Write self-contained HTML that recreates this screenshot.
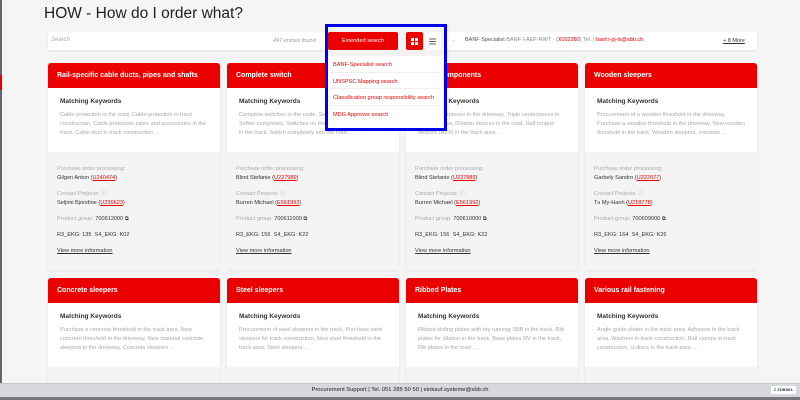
<!DOCTYPE html>
<html><head><meta charset="utf-8"><style>
*{box-sizing:border-box;margin:0;padding:0}
body{width:800px;height:400px;overflow:hidden;background:#f5f5f5;font-family:"Liberation Sans",sans-serif;position:relative;color:#333}
.abs{position:absolute}
h1{position:absolute;left:44px;top:5px;font-size:15.5px;font-weight:normal;color:#222}
.bar{position:absolute;top:32px;height:18px;background:#fff;box-shadow:0 1px 2px rgba(0,0,0,.1)}
.card{position:absolute;width:172px;background:#f4f4f4;box-shadow:0 1px 2px rgba(0,0,0,.08)}
.hd{background:#eb0000;color:#fff;font-weight:bold;font-size:7px;height:25px;line-height:25px;padding-left:9px;border-radius:3px 3px 0 0}
.bd{background:#fff;height:64px;padding:10px 12px 0 12px}
.kt{font-size:6.5px;font-weight:bold;color:#333;margin-bottom:6px}
.kx{font-size:5.6px;line-height:9px;color:#a8a8a8}
.gr{padding:13px 9px 0 9px;font-size:5.6px;color:#333;line-height:9px}
.lb{color:#aaa;margin-top:7px}
.m7{margin-top:7px}
.r{color:#eb0000;text-decoration:underline}
.dd{font-size:5.6px;color:#eb0000;padding:6px 2px 0 3px;height:16.5px;border-bottom:1px solid #eee}
.top{z-index:10}
</style></head><body>
<div class="abs" style="left:0;top:0;width:2px;height:384px;background:#666"></div>
<div class="abs" style="left:0;top:75px;width:2px;height:15px;background:#eb0000"></div>
<h1>HOW - How do I order what?</h1>
<div class="bar" style="left:48px;width:280px"><span class="abs" style="left:3px;top:5px;font-size:6px;color:#aaa;font-style:italic">Search</span><span class="abs" style="left:225px;top:6px;font-size:5.5px;color:#999;font-style:italic">497 entries found</span></div>
<div class="bar" style="left:446px;width:311px;font-size:5.5px;color:#888"><span class="abs" style="left:5px;top:5px;color:#bbb">⌄</span><span class="abs" style="left:19px;top:5px"><span style="color:#555">BANF Specialist</span> BANF I-AEP-RWT - (<span style="color:#eb0000">X002980</span>) Tel. | <span style="color:#eb0000">banf.i-pj-ls@sbb.ch</span></span><span class="abs" style="left:277px;top:6px;color:#333;text-decoration:underline">+ 8 More</span></div>

<!-- row1 -->
<div class="card" style="left:48px;top:63px;height:207px"><div class="hd">Rail-specific cable ducts, pipes and shafts</div><div class="bd"><div class="kt">Matching Keywords</div><div class="kx">Cable protection in the road, Cable protection in track construction, Cable protection pipes and accessories in the track, Cable duct in track construction ...</div></div>
<div class="gr"><div style="color:#aaa">Purchase order processing:</div><div>Gilgen Anton (<span class="r">U240474</span>)</div><div class="lb">Contact Projects: ⓘ</div><div>Seljimi Bjondine (<span class="r">U236623</span>)</div><div class="lb"><span>Product group:</span> <span style="color:#333">700612000 ⧉</span></div><div class="m7">R3_EKG: 135 &nbsp;S4_EKG: K02</div><div class="m7" style="text-decoration:underline">View more information</div></div></div>
<div class="card" style="left:227px;top:63px;height:207px"><div class="hd">Complete switch</div><div class="bd"><div class="kt">Matching Keywords</div><div class="kx">Complete switches in the route, Switches on the track, Soften completely, Switches on the track, Installed switches in the track, Switch completely into the road ...</div></div>
<div class="gr"><div style="color:#aaa">Purchase order processing:</div><div>Blind Stefanie (<span class="r">U227989</span>)</div><div class="lb">Contact Projects: ⓘ</div><div>Burren Michael (<span class="r">E561992</span>)</div><div class="lb"><span>Product group:</span> <span style="color:#333">700611000 ⧉</span></div><div class="m7">R3_EKG: 156 &nbsp;S4_EKG: K22</div><div class="m7" style="text-decoration:underline">View more information</div></div></div>
<div class="card" style="left:406px;top:63px;height:207px"><div class="hd">Switch components</div><div class="bd"><div class="kt">Matching Keywords</div><div class="kx">Track centerpieces in the driveway, Triple centerpieces in the track area, Dilation devices in the road, Half tongue devices (HZV) in the track area ...</div></div>
<div class="gr"><div style="color:#aaa">Purchase order processing:</div><div>Blind Stefanie (<span class="r">U227989</span>)</div><div class="lb">Contact Projects: ⓘ</div><div>Burren Michael (<span class="r">E561992</span>)</div><div class="lb"><span>Product group:</span> <span style="color:#333">700610000 ⧉</span></div><div class="m7">R3_EKG: 156 &nbsp;S4_EKG: K22</div><div class="m7" style="text-decoration:underline">View more information</div></div></div>
<div class="card" style="left:585px;top:63px;height:207px"><div class="hd">Wooden sleepers</div><div class="bd"><div class="kt">Matching Keywords</div><div class="kx">Procurement of a wooden threshold in the driveway, Purchase a wooden threshold in the driveway, New wooden threshold in the track, Wooden sleepers, creosote ...</div></div>
<div class="gr"><div style="color:#aaa">Purchase order processing:</div><div>Garbely Sandro (<span class="r">U222077</span>)</div><div class="lb">Contact Projects: ⓘ</div><div>Tu My-Hanh (<span class="r">U218778</span>)</div><div class="lb"><span>Product group:</span> <span style="color:#333">700609000 ⧉</span></div><div class="m7">R3_EKG: 164 &nbsp;S4_EKG: K26</div><div class="m7" style="text-decoration:underline">View more information</div></div></div>
<!-- row2 -->
<div class="card" style="left:48px;top:278px;height:120px"><div class="hd">Concrete sleepers</div><div class="bd"><div class="kt">Matching Keywords</div><div class="kx">Purchase a concrete threshold in the track area, New concrete threshold in the driveway, New material concrete sleepers in the driveway, Concrete sleepers ...</div></div></div>
<div class="card" style="left:227px;top:278px;height:120px"><div class="hd">Steel sleepers</div><div class="bd"><div class="kt">Matching Keywords</div><div class="kx">Procurement of steel sleepers in the track, Purchase steel sleepers for track construction, New steel threshold in the track area, Steel sleepers ...</div></div></div>
<div class="card" style="left:406px;top:278px;height:120px"><div class="hd">Ribbed Plates</div><div class="bd"><div class="kt">Matching Keywords</div><div class="kx">Ribbed sliding plates with dry running SBB in the track, Rib plates for dilation in the track, Base plates RV in the track, Rib plates in the road ...</div></div></div>
<div class="card" style="left:585px;top:278px;height:120px"><div class="hd">Various rail fastening</div><div class="bd"><div class="kt">Matching Keywords</div><div class="kx">Angle guide plates in the track area, Adhesive in the track area, Washers in track construction, Rail clamps in track construction, U-discs in the track area ...</div></div></div>

<div class="abs top" style="left:325px;top:24px;width:122px;height:107px;background:#f2f2f2"></div>
<div class="abs top" style="left:328px;top:32px;width:70px;height:18px;background:#eb0000;color:#fff;font-size:5.6px;text-align:center;line-height:18px;border-radius:2px">Extended search</div>
<div class="abs top" style="left:406px;top:32px;width:17px;height:18px;background:#eb0000;border-radius:2px"><svg width="17" height="18"><g fill="#fff"><rect x="5" y="6" width="3" height="3"/><rect x="9" y="6" width="3" height="3"/><rect x="5" y="10" width="3" height="3"/><rect x="9" y="10" width="3" height="3"/></g></svg></div>
<div class="abs top" style="left:424px;top:32px;width:17px;height:18px;background:#fff"><svg width="17" height="18"><g stroke="#666" stroke-width="1"><line x1="5" y1="7" x2="12" y2="7"/><line x1="5" y1="9.5" x2="12" y2="9.5"/><line x1="5" y1="12" x2="12" y2="12"/></g></svg></div>
<div class="abs top" style="left:328px;top:56px;width:115px;height:72px;background:#fff;padding:0 2px">
<div class="dd">BANF-Specialist search</div><div class="dd">UNSPSC Mapping search</div><div class="dd">Classification group responsibility search</div><div class="dd" style="border:0">MDG Approver search</div></div>
<div class="abs top" style="left:325px;top:24px;width:122px;height:107px;border:3px solid #0000ee"></div>

<div class="abs top" style="left:0;top:383px;width:800px;height:14px;background:#d6d8dd;border-top:1px solid #c4c6cc;font-size:5.8px;color:#222;text-align:center;line-height:13px">Procurement Support | Tel. 051 285 50 50 | einkauf.systeme@sbb.ch</div>
<div class="abs top" style="left:771px;top:386px;width:25px;height:8px;background:#fff;font-size:4px;font-weight:bold;line-height:8px;text-align:center"><span style="color:#2a8a2a">Z</span> ZÜBSEL</div>
<div class="abs top" style="left:0;top:397px;width:800px;height:3px;background:#777"></div>
</body></html>
